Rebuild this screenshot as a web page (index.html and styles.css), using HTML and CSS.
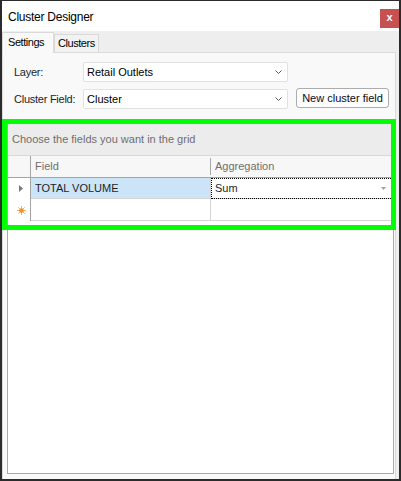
FILE: index.html
```html
<!DOCTYPE html>
<html>
<head>
<meta charset="utf-8">
<title>Cluster Designer</title>
<link rel="stylesheet" href="styles.css">
</head>
<body>
<div class="window">
  <div class="titlebar">
    <span class="title">Cluster Designer</span>
    <span class="close">x</span>
  </div>
  <div class="tabs">
    <div class="tab active">Settings</div>
    <div class="tab">Clusters</div>
  </div>
  <div class="page">
    <div class="form">
      <span class="label">Layer:</span>
      <div class="select"><span>Retail Outlets</span>
        <svg class="chev" width="7" height="4" viewBox="0 0 7 4"><path d="M0.5 0.5 L3.5 3.5 L6.5 0.5" fill="none" stroke="#5a5a5a" stroke-width="1"/></svg>
      </div>
      <span></span>
      <span class="label">Cluster Field:</span>
      <div class="select"><span>Cluster</span>
        <svg class="chev" width="7" height="4" viewBox="0 0 7 4"><path d="M0.5 0.5 L3.5 3.5 L6.5 0.5" fill="none" stroke="#5a5a5a" stroke-width="1"/></svg>
      </div>
      <button class="btn">New cluster field</button>
    </div>
    <div class="grid">
      <div class="group-panel">Choose the fields you want in the grid</div>
      <div class="rows">
        <div class="hcell rowhead"></div>
        <div class="hcell col-field">Field</div>
        <div class="hcell">Aggregation</div>

        <div class="cell rowhead">
          <svg width="4" height="7" viewBox="0 0 4 7"><path d="M0 0 L4 3.5 L0 7 Z" fill="#7a7a7a"/></svg>
        </div>
        <div class="cell col-field selected">TOTAL VOLUME</div>
        <div class="cell focused"><span>Sum</span>
          <svg width="5" height="3" viewBox="0 0 5 3"><path d="M0 0 L5 0 L2.5 3 Z" fill="#a0a0a0"/></svg>
        </div>

        <div class="cell rowhead tall">
          <svg width="9" height="9" viewBox="0 0 9 9">
            <path d="M4.5 0 V9 M0 4.5 H9 M1.3 1.3 L7.7 7.7 M7.7 1.3 L1.3 7.7" stroke="#fbb16a" stroke-width="1"/>
            <circle cx="4.5" cy="4.5" r="2.3" fill="#f7901e"/>
          </svg>
        </div>
        <div class="cell col-field tall"></div>
        <div class="cell tall"></div>
      </div>
      <div class="grid-body"></div>
      <div class="highlight"></div>
    </div>
  </div>
</div>
</body>
</html>
```

FILE: styles.css
```css
* { box-sizing: border-box; }
html, body { margin: 0; padding: 0; }
body {
  width: 401px;
  height: 481px;
  overflow: hidden;
  background: #ffffff;
  font-family: "Liberation Sans", Arial, sans-serif;
  font-size: 11px;
  color: #1e1e1e;
}
.window {
  width: 401px;
  height: 481px;
  border-style: solid;
  border-color: #2b2b2b;
  border-width: 1px 2px 2px 2px;
  background: #eeeeee;
  display: flex;
  flex-direction: column;
}
.titlebar {
  flex: none;
  height: 30px;
  background: #ffffff;
  display: flex;
  justify-content: space-between;
  align-items: flex-start;
}
.title {
  font-size: 12px;
  letter-spacing: -0.25px;
  line-height: 14px;
  margin: 9px 0 0 6px;
  color: #000000;
}
.close {
  width: 19px;
  height: 19px;
  margin-top: 8px;
  background: #c75050;
  color: #ffffff;
  font-weight: bold;
  font-size: 11px;
  line-height: 17px;
  text-align: center;
}
.tabs {
  flex: none;
  height: 21px;
  display: flex;
  align-items: flex-end;
}
.tab {
  height: 18px;
  width: 45px;
  border: 1px solid #d9d9d9;
  border-bottom: none;
  background: #f2f2f2;
  padding: 2px 0 0 3px;
  line-height: 13px;
  letter-spacing: -0.45px;
  color: #000000;
}
.tab.active {
  width: 52px;
  height: 21px;
  margin-bottom: -1px;
  position: relative;
  z-index: 1;
  background: #f9f9f9;
  padding: 3px 0 0 5px;
  border-right-color: #dcdcdc;
}
.page {
  flex: 1;
  background: #f9f9f9;
  border: 1px solid #dadada;
  border-bottom: none;
  margin-right: 3px;
  padding: 9px 1px 5px 4px;
  display: flex;
  flex-direction: column;
  min-height: 0;
}
.form {
  display: grid;
  grid-template-columns: 69px 205px 101px;
  grid-template-rows: 20px 20px;
  column-gap: 0;
  row-gap: 7px;
  margin-left: 7px;
}
.label {
  align-self: center;
  color: #1e1e1e;
  letter-spacing: -0.25px;
  white-space: nowrap;
}
.select {
  background: #ffffff;
  border: 1px solid #e1e1e1;
  border-radius: 2px;
  display: flex;
  align-items: center;
  justify-content: space-between;
  padding: 0 5px 0 3px;
  color: #000000;
}
.chev { display: block; }
.btn {
  margin: -1px 0 0 8px;
  height: 20px;
  width: 93px;
  padding: 0;
  font-family: "Liberation Sans", Arial, sans-serif;
  font-size: 11px;
  color: #0a0a1a;
  background: #fdfdfd;
  border: 1px solid #acacac;
  border-radius: 3px;
}
.grid {
  flex: 1;
  margin-top: 13px;
  border: 1px solid #a9a9a9;
  background: #ffffff;
  display: flex;
  flex-direction: column;
  position: relative;
}
.group-panel {
  height: 33px;
  background: #ececec;
  border-bottom: 1px solid #d8d8d8;
  padding-left: 4px;
  line-height: 32px;
  color: #6e6e6e;
}
.rows {
  display: grid;
  grid-template-columns: 23px 180px 182px;
  grid-auto-rows: auto;
}
.hcell {
  height: 22px;
  background: #f7f7f7;
  border-bottom: 1px solid #a4a4a4;
  padding-left: 4px;
  line-height: 21px;
  color: #6f6f6f;
  position: relative;
}
.hcell.col-field::after {
  content: "";
  position: absolute;
  right: 0;
  top: 2px;
  bottom: 2px;
  width: 1px;
  background: #a8a8a8;
}
.rowhead {
  border-right: 1px solid #a4a4a4;
  padding-left: 0;
}
.cell {
  height: 21px;
  border-bottom: 1px solid #d4d4d4;
  padding-left: 4px;
  line-height: 20px;
  color: #1e1e1e;
}
.cell.tall { height: 22px; }
.cell.rowhead {
  border-bottom: none;
  display: flex;
  align-items: center;
  justify-content: center;
}
.cell.col-field { border-right: 1px solid #d4d4d4; }
.cell.selected { background: #cce4f7; }
.cell.focused {
  outline: 1px dotted #000000;
  outline-offset: -1px;
  display: flex;
  align-items: center;
  justify-content: space-between;
  padding: 0 7px 0 4px;
}
.cell.focused svg { display: block; }
.grid-body { flex: 1; background: #ffffff; }
.highlight {
  position: absolute;
  left: -6px;
  top: -4px;
  width: 394px;
  height: 111px;
  border: 5px solid #00ff00;
  pointer-events: none;
}
```
